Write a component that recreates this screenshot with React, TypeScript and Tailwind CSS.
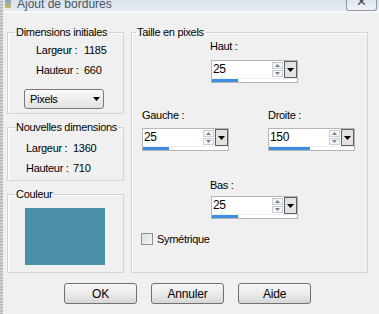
import React from 'react';

const font = { fontFamily: '"Liberation Sans", Arial, sans-serif' };

function Arrow({ className = '' }: { className?: string }) {
  return (
    <svg width="7" height="4" viewBox="0 0 7 4" className={className}>
      <path d="M0 0h7L3.5 4z" fill="currentColor" />
    </svg>
  );
}

function Spin({ value, barClass }: { value: string; barClass: string }) {
  return (
    <div className="w-[87px] h-[23px] border border-[#b5b5b5] bg-white flex flex-col">
      <div className="flex h-[17px]">
        <div className="flex-1 pl-[1px] text-[12px] leading-[17px] tracking-[-0.3px] text-black">{value}</div>
        <div className="w-[11px] flex flex-col justify-center gap-[1px]">
          <div className="h-[7px] border border-[#c9ced4] bg-[#f3f5f7] flex items-center justify-center text-[#6f8196]">
            <svg width="5" height="3" viewBox="0 0 5 3"><path d="M0 3h5L2.5 0z" fill="currentColor" /></svg>
          </div>
          <div className="h-[7px] border border-[#c9ced4] bg-[#f3f5f7] flex items-center justify-center text-[#6f8196]">
            <svg width="5" height="3" viewBox="0 0 5 3"><path d="M0 0h5L2.5 3z" fill="currentColor" /></svg>
          </div>
        </div>
        <div className="w-[13px] ml-[1px] border border-[#5e5e5e] bg-[#e2e2e2] flex items-center justify-center text-black">
          <Arrow />
        </div>
      </div>
      <div className="h-[4px] flex items-end border-t border-[#eeeeee]">
        <div className={`h-[3px] bg-[#3c8de3] ${barClass}`} />
      </div>
    </div>
  );
}

function Btn({ label }: { label: string }) {
  return (
    <div className="w-[73px] h-[21px] rounded-[3px] border border-[#707070] bg-gradient-to-b from-[#f6f6f6] via-[#ececec] to-[#d6d6d6] flex items-center justify-center text-[12px] text-black tracking-[-0.2px]">
      {label}
    </div>
  );
}

function Row({ label, value, pad, labelW }: { label: string; value: string; pad: string; labelW: string }) {
  return (
    <div className={`flex h-[20px] items-center whitespace-nowrap ${pad}`}>
      <span className={labelW}>{label}</span>
      <span>{value}</span>
    </div>
  );
}

export default function App() {
  return (
    <div style={font} className="w-[379px] h-[314px] flex bg-[#f0f0f0] overflow-hidden text-[11px] tracking-[-0.3px] text-black">
      <div className="w-[3px] h-full bg-[repeating-linear-gradient(0deg,#b3b3b3_0px,#b3b3b3_1px,#d8d8d8_1px,#d8d8d8_2px,#c4c4c4_2px,#c4c4c4_3px)]" />
      <div className="flex-1 flex flex-col">
        <div className="h-[11px] flex overflow-hidden bg-gradient-to-b from-[#d9e1ea] to-[#e6ecf2]">
          <div className="w-[6px] h-[8px] ml-[2px] bg-gradient-to-b from-[#8aa4c4] to-[#c9b35a] rounded-b-[1px]" />
          <span className="ml-[6px] -mt-[2px] text-[12px] leading-[12px] tracking-[0px] text-[#4a5563]">Ajout de bordures</span>
          <div className="ml-auto mr-[2px] w-[31px] h-[11px] border border-t-0 border-[#8f98a3] rounded-b-[3px] bg-gradient-to-b from-[#dfe5ec] to-[#f0f3f6] flex justify-center overflow-hidden">
            <span className="-mt-[5px] text-[13px] leading-[13px] text-[#3e4753]">✕</span>
          </div>
        </div>
        <div className="h-[2px] bg-[#f7f9fb]" />

        <div className="flex gap-[7px] pl-[4px] pt-[13px]">
          <div className="w-[117px] flex flex-col">
            <fieldset className="h-[88px] border border-[#d3d3d3] shadow-[inset_1px_1px_0_#ffffff]">
              <legend className="ml-[7px] px-[1px] leading-[13px]">Dimensions initiales</legend>
              <div className="mt-[1px]">
                <Row label="Largeur :" value="1185" pad="pl-[28px]" labelW="w-[48px]" />
                <Row label="Hauteur :" value="660" pad="pl-[28px]" labelW="w-[48px]" />
              </div>
              <div className="mt-[9px] ml-[16px] w-[80px] h-[20px] rounded-[3px] border border-[#7a7a7a] bg-gradient-to-b from-[#fbfbfb] to-[#e1e1e1] flex items-center pl-[5px] pr-[3px]">
                <span className="flex-1">Pixels</span>
                <Arrow />
              </div>
            </fieldset>

            <fieldset className="mt-[7px] h-[60px] border border-[#d3d3d3] shadow-[inset_1px_1px_0_#ffffff]">
              <legend className="ml-[7px] px-[1px] leading-[13px]">Nouvelles dimensions</legend>
              <div className="mt-[4px]">
                <Row label="Largeur :" value="1360" pad="pl-[18px]" labelW="w-[47px]" />
                <Row label="Hauteur :" value="710" pad="pl-[18px]" labelW="w-[47px]" />
              </div>
            </fieldset>

            <fieldset className="mt-[7px] h-[85px] border border-[#d3d3d3] shadow-[inset_1px_1px_0_#ffffff]">
              <legend className="ml-[7px] px-[1px] leading-[13px]">Couleur</legend>
              <div className="mt-[7px] ml-[17px] w-[80px] h-[57px] bg-[#4b8fa8]" />
            </fieldset>
          </div>

          <fieldset className="w-[237px] h-[247px] border border-[#d3d3d3] shadow-[inset_1px_1px_0_#ffffff]">
            <legend className="ml-[4px] px-[1px] leading-[13px]">Taille en pixels</legend>
            <div className="flex flex-col">
              <div className="pl-[78px] leading-[14px]">Haut :</div>
              <div className="pl-[79px] mt-[7px]">
                <Spin value="25" barClass="w-[26px]" />
              </div>
              <div className="flex mt-[25px] pl-[10px] gap-[39px]">
                <div className="flex flex-col">
                  <span className="leading-[14px]">Gauche :</span>
                  <div className="mt-[6px]">
                    <Spin value="25" barClass="w-[26px]" />
                  </div>
                </div>
                <div className="flex flex-col">
                  <span className="leading-[14px]">Droite :</span>
                  <div className="mt-[6px]">
                    <Spin value="150" barClass="w-[41px]" />
                  </div>
                </div>
              </div>
              <div className="pl-[78px] mt-[27px] leading-[14px]">Bas :</div>
              <div className="pl-[79px] mt-[4px]">
                <Spin value="25" barClass="w-[26px]" />
              </div>
              <div className="flex items-center mt-[14px] pl-[9px]">
                <div className="w-[12px] h-[12px] border border-[#8e8f8f] bg-gradient-to-br from-[#dcdcdc] to-[#f6f6f6]" />
                <span className="ml-[4px] leading-[12px]">Symétrique</span>
              </div>
            </div>
          </fieldset>
        </div>

        <div className="flex gap-[14px] pl-[61px] mt-[10px]">
          <Btn label="OK" />
          <Btn label="Annuler" />
          <Btn label="Aide" />
        </div>
      </div>
    </div>
  );
}
